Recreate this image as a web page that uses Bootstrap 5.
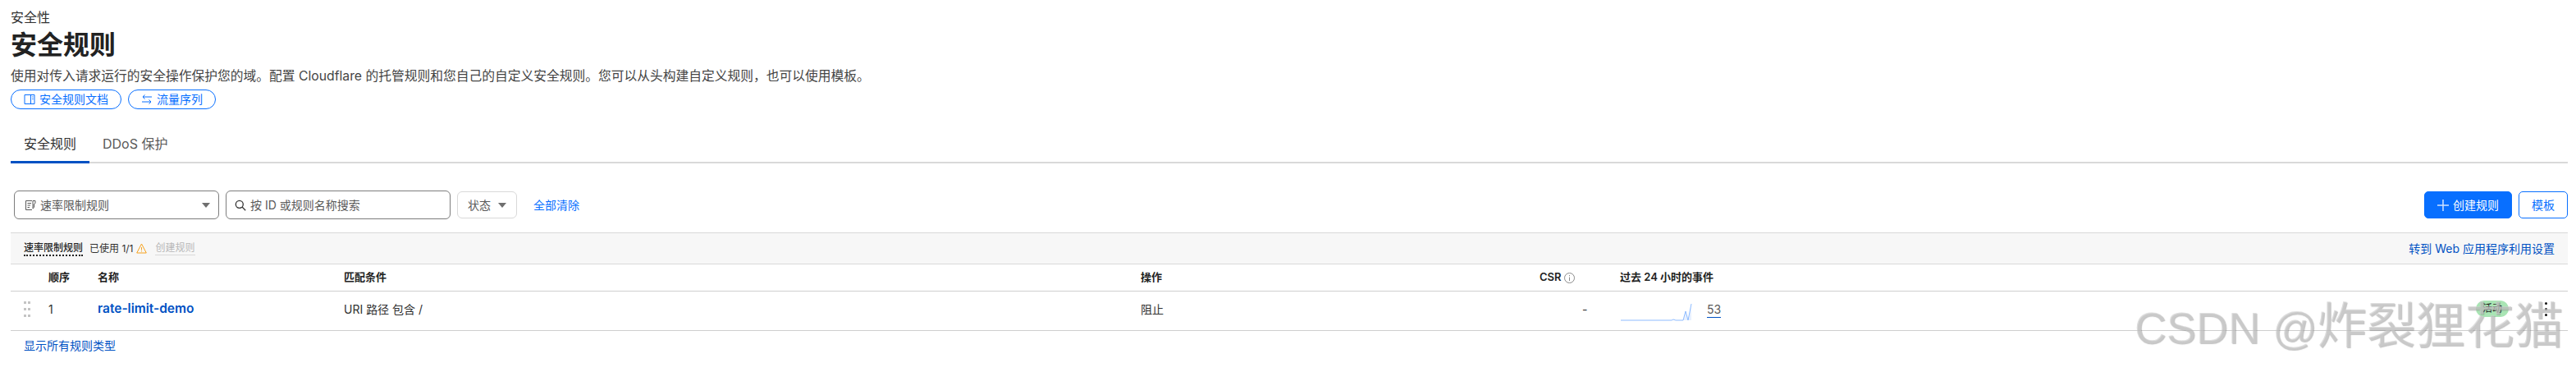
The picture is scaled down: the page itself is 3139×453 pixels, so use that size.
<!DOCTYPE html>
<html lang="zh-CN">
<head>
  <meta charset="UTF-8" />
  <title>安全规则</title>
  <meta name="viewport" content="width=device-width, initial-scale=1" />
  <link href="https://cdn.jsdelivr.net/npm/bootstrap@5.3.0/dist/css/bootstrap.min.css" rel="stylesheet" />
  <style>
    body { font-family: Inter, "Noto Sans CJK SC", sans-serif; color: #313131; background: #fff; font-size: 14px; }
    .page-wrap { position: relative; height: 453px; overflow: hidden; padding: 11px 10px 0 13px; }
    .crumb { font-size: 16px; line-height: 20px; margin-bottom: 2px; color: #313131; }
    .page-title { font-size: 32px; line-height: 44px; font-weight: 700; margin: 0; color: #222; }
    .page-desc { font-size: 15.75px; line-height: 24px; margin: 4px 0 4px; color: #444; }
    .doc-btn { --bs-btn-font-size: 14px; --bs-btn-padding-y: 0; --bs-btn-padding-x: 15px; --bs-btn-color: #086fff; --bs-btn-border-color: #086fff; height: 24px; line-height: 22px; display: inline-flex; align-items: center; gap: 5px; white-space: nowrap; }
    .doc-btn svg { flex: none; }
    .rule-tabs { margin-top: 22px; border-bottom: 2px solid #d9d9d9; --bs-nav-tabs-border-width: 0; }
    .rule-tabs .nav-link { font-size: 16px; line-height: 24px; padding: 8px 16px 9px; color: #595959; border: 0; margin-bottom: -2px; border-bottom: 3px solid transparent; border-radius: 0; }
    .rule-tabs .nav-link.active { color: #313131; border-bottom-color: #0051c3; }
    .filter-bar { margin-top: 33px; padding-left: 4px; height: 35px; }
    .filter-box { height: 35px; border: 1px solid #7c7c7c; border-radius: 6px; display: flex; align-items: center; color: #595959; background: #fff; }
    .filter-type { width: 250px; padding: 0 10px 0 12px; gap: 5px; }
    .filter-search { width: 274px; margin-left: 8px; padding: 0 10px; gap: 5px; }
    .filter-status { width: 73px; height: 33px; margin-left: 8px; border-color: #d9d9d9; justify-content: center; gap: 9px; }
    .clear-link { margin-left: 20px; color: #086fff; text-decoration: none; }
    .caret { width: 0; height: 0; border-left: 5px solid transparent; border-right: 5px solid transparent; border-top: 6px solid #6f6f6f; }
    .btn-create { --bs-btn-bg: #086fff; --bs-btn-border-color: #086fff; --bs-btn-font-size: 14px; --bs-btn-padding-y: 0; width: 107px; height: 33px; display: inline-flex; align-items: center; justify-content: center; gap: 5px; border-radius: 5px; }
    .btn-template { --bs-btn-color: #086fff; --bs-btn-border-color: #086fff; --bs-btn-font-size: 14px; --bs-btn-padding-y: 0; width: 60px; height: 33px; margin-left: 8px; border-radius: 5px; }
    .rule-band { margin-top: 16px; height: 39px; padding: 0 16px; background: #f7f7f7; border-top: 1px solid #d9d9d9; border-bottom: 1px solid #d9d9d9; font-size: 12px; }
    .band-title { font-weight: 500; color: #222; border-bottom: 2px dotted #222; line-height: 16px; }
    .band-create { color: #b8b8b8; border-bottom: 1px solid #d9d9d9; line-height: 16px; margin-left: 10px; }
    .band-link { font-size: 14px; color: #0051c3; text-decoration: none; }
    .rule-table { table-layout: fixed; margin: 0; width: 100%; --bs-table-bg: transparent; }
    .rule-table th, .rule-table td { padding: 0; border-bottom: 1px solid #cfcfcf; vertical-align: middle; font-size: 13px; }
    .rule-table th { height: 32px; font-weight: 600; color: #222; }
    .rule-table td { height: 48px; padding-bottom: 4px; color: #313131; font-size: 14px; }
    .c-grip { width: 46px; }
    .c-order { width: 60px; }
    .c-name { width: 300px; }
    .c-match { width: 971px; }
    .c-action { width: 486px; }
    .c-csr { width: 98px; }
    .grip-dots { display: grid; grid-template-columns: 3px 3px; gap: 5px 2px; margin-left: 16px; }
    .grip-dots i { width: 3px; height: 3px; background: #c4c4c4; display: block; }
    .rule-name { color: #0051c3; font-weight: 600; font-size: 15.5px; text-decoration: none; }
    .event-count { color: #595959; font-size: 14px; line-height: 18px; border-bottom: 1px solid #0051c3; margin-left: 18px; margin-top: 3px; text-decoration: none; }
    .active-pill { width: 40px; height: 20px; border-radius: 10px; background: #a9e5b4; color: #1d1d1d; font-size: 12px; line-height: 20px; text-align: center; margin-right: 44px; }
    .kebab { display: flex; flex-direction: column; gap: 4px; margin-right: 25px; }
    .kebab i { width: 3px; height: 3px; border-radius: 50%; background: #111; display: block; }
    .show-all { display: inline-block; margin: 7px 0 0 16px; color: #0051c3; text-decoration: none; font-size: 14px; }
    .watermark { position: absolute; left: 2601px; top: 362px; white-space: nowrap; font-family: "Liberation Sans", "Noto Sans CJK SC", sans-serif; font-size: 60px; line-height: 72px; color: rgba(205, 205, 205, .6); text-shadow: 1px 1px 1px rgba(120, 120, 120, .45); pointer-events: none; }
    .watermark span { font-size: 54px; }
  </style>
</head>
<body>
<div class="page-wrap">
  <div class="crumb">安全性</div>
  <h1 class="page-title">安全规则</h1>
  <p class="page-desc">使用对传入请求运行的安全操作保护您的域。配置 Cloudflare 的托管规则和您自己的自定义安全规则。您可以从头构建自定义规则，也可以使用模板。</p>
  <div class="d-flex gap-2">
    <a href="#" class="btn btn-outline-primary rounded-pill doc-btn">
      <svg width="14" height="14" viewBox="0 0 14 14" fill="none" stroke="currentColor"><path d="M1 1.5h12v11H1zM8.5 1.5v11M10.2 4h1.4M10.2 6.5h1.4"/></svg>
      安全规则文档
    </a>
    <a href="#" class="btn btn-outline-primary rounded-pill doc-btn">
      <svg width="14" height="14" viewBox="0 0 14 14" fill="none" stroke="currentColor"><path d="M13 4H2M4.500 1.500 2 4l2.500 2.500M1 10h11M9.500 7.500 12 10l-2.500 2.500"/></svg>
      流量序列
    </a>
  </div>

  <ul class="nav nav-tabs rule-tabs">
    <li class="nav-item"><a class="nav-link active" href="#">安全规则</a></li>
    <li class="nav-item"><a class="nav-link" href="#">DDoS 保护</a></li>
  </ul>

  <div class="d-flex align-items-center filter-bar">
    <div class="filter-box filter-type">
      <svg width="14" height="14" viewBox="0 0 14 14" fill="none" stroke="#595959"><path d="M9 1.500H1.500v11H9M3.500 4.500H8M3.500 7H7M3.500 9.500H6M10 1.500h3v3l-1.500 1v4l-1.500 1.500z"/></svg>
      <span>速率限制规则</span>
      <span class="caret ms-auto"></span>
    </div>
    <div class="filter-box filter-search">
      <svg width="14" height="14" viewBox="0 0 14 14" fill="none" stroke="#333" stroke-width="1.300"><circle cx="5.800" cy="5.800" r="4.500"/><path d="m9 9 4.200 4.200"/></svg>
      <span>按 ID 或规则名称搜索</span>
    </div>
    <div class="filter-box filter-status"><span>状态</span><span class="caret"></span></div>
    <a href="#" class="clear-link">全部清除</a>
    <div class="ms-auto d-flex">
      <button type="button" class="btn btn-primary btn-create">
        <svg width="14" height="14" viewBox="0 0 14 14" stroke="#cfe2ff" stroke-width="1.500"><path d="M7 0v14M0 7h14"/></svg>
        创建规则
      </button>
      <button type="button" class="btn btn-outline-primary btn-template">模板</button>
    </div>
  </div>

  <div class="d-flex align-items-center rule-band">
    <span class="band-title">速率限制规则</span>
    <span class="ms-2">已使用 1/1</span>
    <svg class="ms-1" width="13" height="13" viewBox="0 0 13 13" fill="none" stroke="#f6a21e"><path d="M6.500 1 12.300 12H.700zM6.500 5v3.500M6.500 9.500v1"/></svg>
    <span class="band-create">创建规则</span>
    <a href="#" class="band-link ms-auto">转到 Web 应用程序利用设置</a>
  </div>

  <table class="table rule-table">
    <thead>
      <tr>
        <th class="c-grip"></th>
        <th class="c-order">顺序</th>
        <th class="c-name">名称</th>
        <th class="c-match">匹配条件</th>
        <th class="c-action">操作</th>
        <th class="c-csr">
          CSR
          <svg width="13" height="13" viewBox="0 0 13 13" fill="none" stroke="#8a8a8a"><circle cx="6.500" cy="6.500" r="6"/><path d="M6.500 5.500v4.500M6.500 3v1.200"/></svg>
        </th>
        <th>过去 24 小时的事件</th>
      </tr>
    </thead>
    <tbody>
      <tr>
        <td><div class="grip-dots"><i></i><i></i><i></i><i></i><i></i><i></i></div></td>
        <td>1</td>
        <td><a href="#" class="rule-name">rate-limit-demo</a></td>
        <td>URI 路径 包含 /</td>
        <td>阻止</td>
        <td><span class="ms-5 ps-1">-</span></td>
        <td>
          <div class="d-flex align-items-center">
            <svg class="mt-2" width="88" height="21" viewBox="0 0 88 21" fill="none">
              <path d="M77 20 80 9l3 11 4-20v20z" fill="#e8f1ff"/>
              <polyline points="1,20 63,20 65,19 68,20 77,20 80,9 83,20 87,0" stroke="#8fbcff" stroke-width="1"/>
            </svg>
            <a href="#" class="event-count">53</a>
            <span class="active-pill ms-auto">活动</span>
            <span class="kebab"><i></i><i></i><i></i></span>
          </div>
        </td>
      </tr>
    </tbody>
  </table>

  <a href="#" class="show-all">显示所有规则类型</a>
  <div class="watermark"><span>CSDN @</span>炸裂狸花猫</div>
</div>
<script src="https://cdn.jsdelivr.net/npm/bootstrap@5.3.0/dist/js/bootstrap.bundle.min.js"></script>
</body>
</html>
